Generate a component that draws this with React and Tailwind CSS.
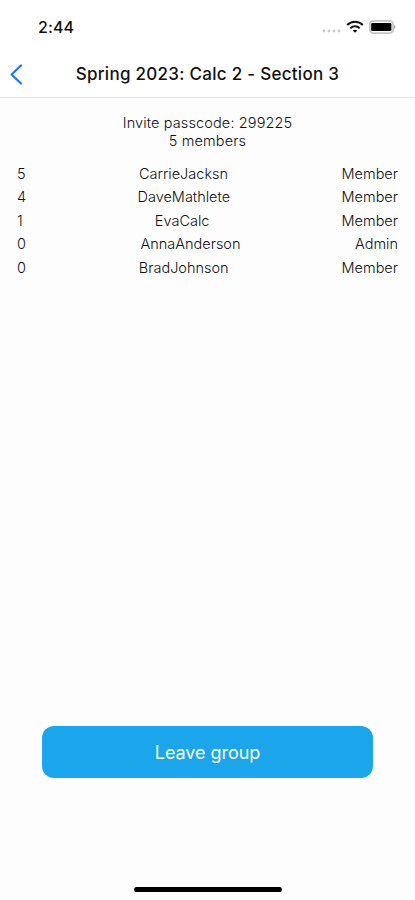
const members = [
  { score: 5, name: "CarrieJacksn", role: "Member" },
  { score: 4, name: "DaveMathlete", role: "Member" },
  { score: 1, name: "EvaCalc", role: "Member" },
  { score: 0, name: "AnnaAnderson", role: "Admin" },
  { score: 0, name: "BradJohnson", role: "Member" },
];

function StatusBar() {
  return (
    <div className="flex h-[54px] items-center justify-between pl-[38px] pr-[19px]">
      <span className="text-[16px] leading-5 font-medium tracking-[0.1px]">2:44</span>
      <div className="flex items-center">
        {/* No signal dots */}
        <svg width="19" height="4" viewBox="0 0 19 4" className="mt-2 mr-[5px]" fill="#c9c9c9">
          <circle cx="2" cy="2" r="1.4" />
          <circle cx="7" cy="2" r="1.4" />
          <circle cx="12" cy="2" r="1.4" />
          <circle cx="17" cy="2" r="1.4" />
        </svg>
        {/* Wifi */}
        <svg width="18" height="14" viewBox="0 0 18 14" className="mr-[5px]" fill="none" stroke="#111" strokeWidth="2">
          <path d="M1.2 5C5.5 0.6 12.5 0.6 16.8 5" />
          <path d="M4.3 8.3C7 5.7 11 5.7 13.7 8.3" />
          <path d="M9 12.8L6.7 10.5C8 9.4 10 9.4 11.3 10.5Z" fill="#111" stroke="none" />
        </svg>
        {/* Battery */}
        <svg width="27" height="14" viewBox="0 0 27 14">
          <rect x="0.9" y="0.9" width="23.2" height="12.2" rx="3.6" fill="#fff" stroke="#c6c6c6" strokeWidth="1.8" />
          <rect x="2.2" y="3" width="20.2" height="8" rx="1" fill="#000" />
          <path d="M25.2 5C26.8 5.6 26.8 8.4 25.2 9Z" fill="#999" />
        </svg>
      </div>
    </div>
  );
}

function Header() {
  return (
    <div className="grid h-11 grid-cols-[38px_1fr_38px] items-center border-b border-[#e6e6e6]">
      <button aria-label="Back" className="mt-[-3px] pl-[10px]">
        <svg width="13" height="21" viewBox="0 0 13 21" fill="none" stroke="#1f75f5" strokeWidth="2.2" strokeLinecap="round" strokeLinejoin="round">
          <path d="M11 1.5L1.6 10.5L11 19.5" />
        </svg>
      </button>
      <h1 className="mt-[-3px] text-center text-[17px] leading-6 font-medium tracking-[0.28px] whitespace-nowrap">
        Spring 2023: Calc 2 - Section 3
      </h1>
    </div>
  );
}

export default function App() {
  return (
    <div className="flex h-[900px] w-full flex-col bg-[#fdfdfd] font-['Inter',sans-serif] text-[#111]">
      <div className="bg-white">
        <StatusBar />
        <Header />
      </div>

      <div className="flex flex-1 flex-col">
        <div className="pt-4 text-center text-[14.5px] leading-[18px] font-light tracking-[0.12px]">
          <p>Invite passcode: 299225</p>
          <p>5 members</p>
        </div>

        {/* Member list */}
        <ul className="mt-3 px-[17px] text-[14.5px] font-light">
          {members.map((member) => (
            <li key={member.name} className="flex h-[23.5px] items-center justify-between">
              <span>{member.score}</span>
              <span>{member.name}</span>
              <span>{member.role}</span>
            </li>
          ))}
        </ul>
      </div>

      <div className="px-[42px] pb-[108px]">
        <button className="h-[52px] w-full rounded-[12px] bg-[#1ba6ec] pt-px text-[18px] tracking-[-0.05px] text-white">
          Leave group
        </button>
      </div>

      {/* Home indicator */}
      <div className="mx-auto mt-px mb-2 h-[5px] w-[148px] rounded-full bg-black" />
    </div>
  );
}
